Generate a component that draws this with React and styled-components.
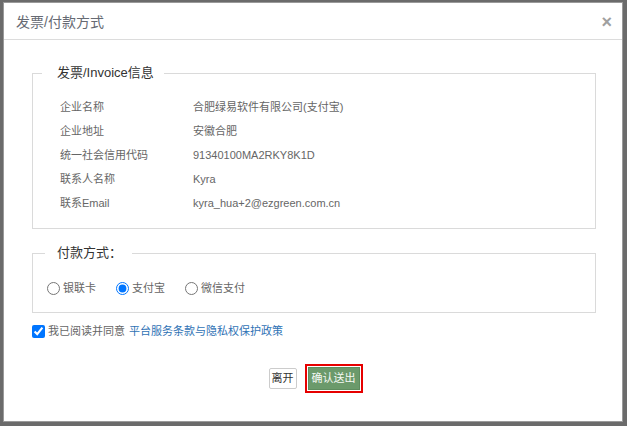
import React from "react";
import styled, { createGlobalStyle } from "styled-components";

const Global = createGlobalStyle`
  html, body { margin: 0; padding: 0; }
  body {
    background: #6b6b6b;
    font-family: "Liberation Sans", "Noto Sans CJK SC", sans-serif;
    width: 627px;
    height: 426px;
    overflow: hidden;
  }
`;

const Page = styled.div`
  padding: 2px 0 0 3px;
`;

const Dialog = styled.div`
  box-sizing: border-box;
  width: 620px;
  height: 420px;
  background: #fff;
  border: 1px solid #9a9a9a;
  display: flex;
  flex-direction: column;
`;

const Header = styled.div`
  height: 36px;
  border-bottom: 1px solid #dcdcdc;
  display: flex;
  align-items: center;
  justify-content: space-between;
  padding: 0 10px 0 12px;
`;

const Title = styled.h4`
  margin: 0;
  font-size: 14px;
  font-weight: normal;
  color: #666a73;
`;

const Close = styled.button`
  border: 0;
  background: none;
  padding: 0;
  font-size: 18px;
  font-weight: bold;
  line-height: 1;
  color: #a0a0a0;
  font-family: "Liberation Sans", sans-serif;
  margin-top: 2px;
`;

const Body = styled.div`
  padding: 23px 26px 0 28px;
  display: flex;
  flex-direction: column;
`;

const Fieldset = styled.fieldset`
  margin: ${(p) => p.$mt || 0}px 0 0;
  border: 1px solid #dadada;
  padding: ${(p) => p.$pad};
  min-width: 0;
`;

const Legend = styled.legend`
  font-size: 13px;
  line-height: 20px;
  color: #333;
  margin-left: ${(p) => p.$ml}px;
  padding: ${(p) => p.$pad};
`;

const InfoGrid = styled.div`
  display: grid;
  grid-template-columns: 133px 1fr;
  padding-left: 27px;
  font-size: 11px;
  line-height: 24px;
  color: #666;
`;

const RadioRow = styled.div`
  display: flex;
  align-items: center;
  gap: 20px;
  padding-left: 14px;
  font-size: 11px;
  line-height: 20px;
  color: #666;
`;

const RadioLabel = styled.label`
  display: flex;
  align-items: center;
`;

const Radio = styled.input`
  width: 13px;
  height: 13px;
  margin: 0 3px 0 0;
`;

const AgreeRow = styled.label`
  display: flex;
  align-items: center;
  margin-top: 10px;
  font-size: 11px;
  line-height: 16px;
  color: #666;
`;

const Checkbox = styled.input`
  width: 13px;
  height: 13px;
  margin: 0 3px 0 0;
`;

const Link = styled.a`
  color: #2f72b5;
  text-decoration: none;
  margin-left: 4px;
`;

const Actions = styled.div`
  display: flex;
  justify-content: center;
  align-items: center;
  gap: 11px;
  margin-top: 28px;
`;

const Button = styled.button`
  font-family: "Liberation Sans", "Noto Sans CJK SC", sans-serif;
  font-size: 11px;
  line-height: 13px;
  border-radius: ${(p) => (p.$primary ? "0" : "2px")};
  padding: ${(p) => (p.$primary ? "4px 3px" : "3px 2px")};
  border: 1px solid ${(p) => (p.$primary ? "#5e8c5e" : "#cccccc")};
  background: ${(p) => (p.$primary ? "#6b9a6b" : "#fff")};
  color: ${(p) => (p.$primary ? "#f4f8f4" : "#333")};
  outline: ${(p) => (p.$primary ? "2px solid #e60000" : "none")};
  outline-offset: 1px;
`;

const info = [
  ["企业名称", "合肥绿易软件有限公司(支付宝)"],
  ["企业地址", "安徽合肥"],
  ["统一社会信用代码", "91340100MA2RKY8K1D"],
  ["联系人名称", "Kyra"],
  ["联系Email", "kyra_hua+2@ezgreen.com.cn"],
];

const methods = ["银联卡", "支付宝", "微信支付"];

export default function App() {
  return (
    <Page>
      <Global />
      <Dialog>
        <Header>
          <Title>发票/付款方式</Title>
          <Close>×</Close>
        </Header>
        <Body>
          <Fieldset $pad="12px 10px 13px 0">
            <Legend $ml={9} $pad="0 10px 0 15px">发票/Invoice信息</Legend>
            <InfoGrid>
              {info.map(([k, v]) => (
                <React.Fragment key={k}>
                  <span>{k}</span>
                  <span>{v}</span>
                </React.Fragment>
              ))}
            </InfoGrid>
          </Fieldset>
          <Fieldset $mt={14} $pad="15px 10px 14px 0">
            <Legend $ml={12} $pad="0 10px 0 12px">付款方式：</Legend>
            <RadioRow>
              {methods.map((m) => (
                <RadioLabel key={m}>
                  <Radio type="radio" name="pay" defaultChecked={m === "支付宝"} />
                  {m}
                </RadioLabel>
              ))}
            </RadioRow>
          </Fieldset>
          <AgreeRow>
            <Checkbox type="checkbox" defaultChecked />
            我已阅读并同意
            <Link href="#">平台服务条款与隐私权保护政策</Link>
          </AgreeRow>
          <Actions>
            <Button>离开</Button>
            <Button $primary>确认送出</Button>
          </Actions>
        </Body>
      </Dialog>
    </Page>
  );
}
